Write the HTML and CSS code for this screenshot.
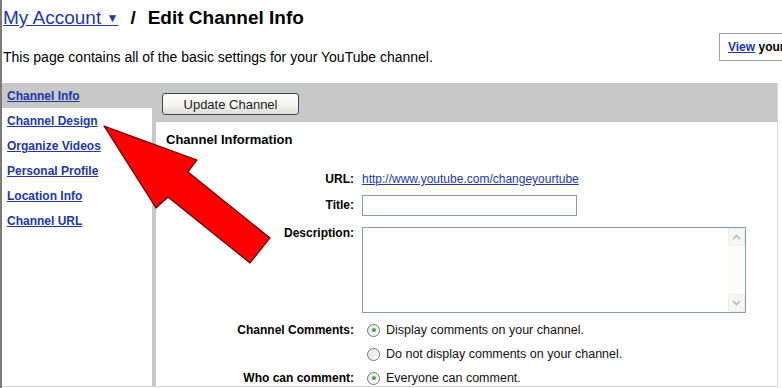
FILE: index.html
```html
<!DOCTYPE html>
<html lang="en">
<head>
    <meta charset="UTF-8">
    <title>Edit Channel Info</title>
    <link rel="stylesheet" href="styles.css">
</head>
<body>
    <div class="page">
        <h1 class="title">
            <a href="#" class="account">My Account <span class="caret">&#9660;</span></a>
            <span class="sep">/</span>
            <span>Edit Channel Info</span>
        </h1>
        <div class="intro">
            <p>This page contains all of the basic settings for your YouTube channel.</p>
            <div class="view-box"><a href="#">View</a> your channel</div>
        </div>

        <div class="layout">
            <div class="sidebar">
                <a href="#" class="nav-link nav-active">Channel Info</a>
                <div class="nav-list">
                    <a href="#" class="nav-link">Channel Design</a>
                    <a href="#" class="nav-link">Organize Videos</a>
                    <a href="#" class="nav-link">Personal Profile</a>
                    <a href="#" class="nav-link">Location Info</a>
                    <a href="#" class="nav-link">Channel URL</a>
                </div>
            </div>
            <div class="content">
                <div class="toolbar">
                    <button class="update-button">Update Channel</button>
                </div>
                <div class="panel">
                    <h2>Channel Information</h2>
                    <div class="form">
                        <label class="label">URL:</label>
                        <a href="#" class="url-link">http://www.youtube.com/changeyourtube</a>

                        <label class="label row-title">Title:</label>
                        <input type="text" class="title-input">

                        <label class="label row-desc">Description:</label>
                        <div class="desc-box">
                            <textarea class="desc-input"></textarea>
                            <div class="scrollbar">
                                <span class="scroll-btn">
                                    <svg width="9" height="6" viewBox="0 0 9 6"><path d="M1 5 L4.5 1.5 L8 5" fill="none" stroke="#b4b9c2" stroke-width="1.6"/></svg>
                                </span>
                                <span class="scroll-btn">
                                    <svg width="9" height="6" viewBox="0 0 9 6"><path d="M1 1 L4.5 4.5 L8 1" fill="none" stroke="#b4b9c2" stroke-width="1.6"/></svg>
                                </span>
                            </div>
                        </div>

                        <label class="label row-comments">Channel Comments:</label>
                        <div class="radios row-comments">
                            <label class="radio"><span class="dot checked"></span>Display comments on your channel.</label>
                            <label class="radio"><span class="dot"></span>Do not display comments on your channel.</label>
                        </div>

                        <label class="label">Who can comment:</label>
                        <div class="radios">
                            <label class="radio"><span class="dot checked"></span>Everyone can comment.</label>
                        </div>
                    </div>
                </div>
            </div>
        </div>

        <!-- the red pointer over the sidebar -->
        <svg class="arrow" width="200" height="160" viewBox="0 0 200 160">
            <polygon points="2,2 95,36 86,48 168,114 148,139 66,73 54,84"
                     fill="#ff0000" stroke="#5a0000" stroke-width="1.2" stroke-linejoin="round"/>
        </svg>
    </div>
</body>
</html>
```

FILE: styles.css
```css
body {
    margin: 0;
    padding: 0;
    background: white;
    font-family: "Liberation Sans", Arial, sans-serif;
    color: black;
    overflow: hidden;
}
a {
    color: #2137a6;
}
.page {
    position: relative;
    border-left: 2px solid #7b7b76;
    height: 388px;
}
.title {
    margin: 0;
    padding: 7px 0 0 1px;
    font-size: 19px;
    font-weight: bold;
    line-height: 22px;
    height: 29px;
    display: flex;
    gap: 12px;
}
.account {
    font-weight: normal;
    color: #2137a6;
}
.caret {
    font-size: 12px;
    vertical-align: 2px;
}
.intro {
    display: flex;
    justify-content: space-between;
    align-items: flex-start;
    height: 47px;
}
.intro p {
    margin: 12px 0 0 1px;
    font-size: 14px;
    line-height: 18px;
}
.view-box {
    margin-top: -3px;
    margin-right: -105px;
    width: 150px;
    border: 1px solid #a0a0a0;
    padding: 5px 8px;
    font-size: 12px;
    font-weight: bold;
    line-height: 16px;
    white-space: nowrap;
}
.layout {
    display: grid;
    grid-template-columns: 150px 1fr;
    column-gap: 4px;
    background: #c8c8c8;
    margin-right: 4px;
    border-right: 1px solid #dcdcd4;
    height: 303px;
    border-bottom: 1px solid #d8d8d8;
}
.sidebar {
    display: flex;
    flex-direction: column;
}
.nav-link {
    display: block;
    font-size: 12px;
    font-weight: bold;
    line-height: 25px;
    padding: 1px 0 0 5px;
    height: 25px;
    box-sizing: border-box;
}
.nav-list {
    background: white;
    flex: 1;
}
.content {
    display: flex;
    flex-direction: column;
}
.toolbar {
    height: 39px;
    padding: 10px 0 0 6px;
    box-sizing: border-box;
}
.update-button {
    width: 137px;
    height: 22px;
    font-family: "Liberation Sans", Arial, sans-serif;
    font-size: 13px;
    color: #222;
    border: 1px solid #40484f;
    border-radius: 3px;
    background: linear-gradient(#ffffff, #f2f2ee 60%, #dcdcd4);
    padding: 0;
}
.panel {
    background: white;
    flex: 1;
    padding: 10px 0 0 10px;
}
.panel h2 {
    margin: 0;
    font-size: 13px;
    line-height: 16px;
}
.form {
    display: grid;
    grid-template-columns: 188px 384px;
    column-gap: 8px;
    row-gap: 8px;
    margin-top: 23px;
    font-size: 12px;
}
.label {
    text-align: right;
    font-weight: bold;
    line-height: 16px;
}
.url-link {
    line-height: 16px;
}
.title-input {
    width: 215px;
    height: 21px;
    box-sizing: border-box;
    border: 1px solid #7f9db9;
    margin: 0;
}
.row-title {
    line-height: 21px;
}
.row-desc {
    margin-top: 1px;
}
.desc-box {
    width: 384px;
    height: 86px;
    box-sizing: border-box;
    border: 1px solid #7f9db9;
    display: flex;
    margin-top: 3px;
}
.desc-input {
    flex: 1;
    border: none;
    resize: none;
    margin: 0;
    outline: none;
}
.scrollbar {
    width: 17px;
    background: #fcfcfa;
    display: flex;
    flex-direction: column;
    justify-content: space-between;
}
.scroll-btn {
    height: 16px;
    border: 1px solid #eeede5;
    border-radius: 2px;
    background: #f6f6f3;
    display: flex;
    align-items: center;
    justify-content: center;
}
.row-comments {
    margin-top: 1px;
}
.radios {
    display: flex;
    flex-direction: column;
    gap: 8px;
    padding-left: 5px;
}
.radio {
    display: flex;
    align-items: center;
    gap: 6px;
    font-size: 12.5px;
    line-height: 16px;
    color: #111;
}
.dot {
    width: 13px;
    height: 13px;
    border: 1px solid #6f7780;
    border-radius: 50%;
    background: linear-gradient(135deg, #e2e2dd, #ffffff);
    box-sizing: border-box;
    position: relative;
}
.dot.checked::after {
    content: "";
    position: absolute;
    left: 3.5px;
    top: 3.5px;
    width: 4px;
    height: 4px;
    border-radius: 50%;
    background: #3aa83a;
}
.arrow {
    position: absolute;
    left: 100px;
    top: 124px;
}
```
